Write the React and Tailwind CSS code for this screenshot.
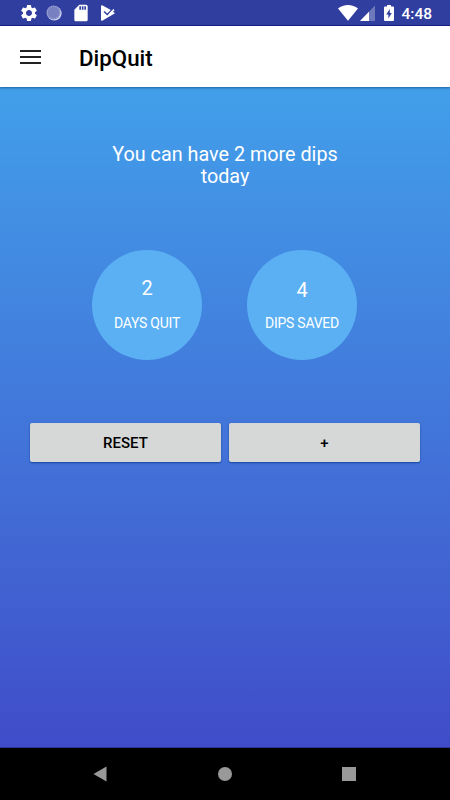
import { MdSettings, MdSdCard } from "react-icons/md";

function StatusBar() {
  return (
    <div className="flex h-[26px] items-center justify-between border-b border-[#151d84] bg-[#303f9f] pl-[18.5px] pr-[18px] text-white">
      <div className="flex items-center pt-px">
        <MdSettings className="h-5 w-5" />
        <svg viewBox="0 0 16 16" className="ml-[7.5px] h-4 w-4">
          <circle cx="8.3" cy="8.3" r="7.3" fill="#d5d9f0" />
          <circle cx="7.5" cy="7.5" r="7" fill="#7781c2" />
          <circle
            cx="7.5"
            cy="7.5"
            r="6.2"
            fill="none"
            stroke="#b3b9df"
            strokeWidth="1"
            strokeDasharray="1 1"
          />
        </svg>
        <MdSdCard className="ml-[9px] h-5 w-5" />
        <svg viewBox="0 0 15 16" className="ml-[9.5px] h-4 w-[15px]">
          <path
            d="M1.2 0.2 L9.8 5 L14 8.2 L1.2 15.8 Q0 16 0 14.8 V1.2 Q0 0 1.2 0.2Z"
            fill="#fff"
          />
          <path
            d="M3 6.4 L6.2 9.6 L11.4 4.4"
            fill="none"
            stroke="#303f9f"
            strokeWidth="1.4"
          />
          <path
            d="M8.4 9.2 L13 4.6"
            fill="none"
            stroke="#fff"
            strokeWidth="1.6"
          />
        </svg>
      </div>
      <div className="flex items-center">
        <svg viewBox="0 0 20 16" className="h-4 w-5">
          <path d="M0 3.6 C5.5 -1.2 14.5 -1.2 20 3.6 L10 15.8Z" fill="#fff" />
        </svg>
        <svg viewBox="0 0 15 16" className="ml-[2px] h-4 w-[15px]">
          <path d="M0 16 L15 0.5 V16Z" fill="#fff" fillOpacity="0.3" />
          <path d="M0 16 L9 6.7 V16Z" fill="#fff" />
        </svg>
        <svg viewBox="0 0 10 16" className="ml-[9px] h-4 w-[10px]">
          <path
            d="M3 0 H7 V1.6 H9 Q10 1.6 10 2.6 V15 Q10 16 9 16 H1 Q0 16 0 15 V2.6 Q0 1.6 1 1.6 H3Z"
            fill="#fff"
          />
          <path d="M5.8 4 L2.2 9.4 H4.4 V13.4 L7.8 7.9 H5.8Z" fill="#303f9f" />
        </svg>
        <span className="ml-[7.5px] pt-[4px] text-[15.5px] font-medium leading-none">
          4:48
        </span>
      </div>
    </div>
  );
}

function AppBar() {
  return (
    <header className="z-10 flex h-[61px] items-center bg-white pl-5 shadow-[0_1px_2px_rgba(0,60,110,0.6)]">
      <button className="flex w-[21px] flex-col gap-1" aria-label="Menu">
        <span className="h-[2px] w-full bg-[#222]" />
        <span className="h-[2px] w-full bg-[#222]" />
        <span className="h-[2px] w-full bg-[#222]" />
      </button>
      <h1 className="ml-[38px] pt-[3px] text-[22.3px] font-medium leading-none text-black">
        DipQuit
      </h1>
    </header>
  );
}

function Stat({ value, label, className }) {
  return (
    <div
      className={`flex h-[110px] w-[110px] flex-col items-center rounded-full bg-[#5bb0f3] text-white ${className}`}
    >
      <span className="text-xl leading-6">{value}</span>
      <span className="mt-auto mb-[27px] text-sm leading-5 tracking-[-0.25px]">
        {label}
      </span>
    </div>
  );
}

function ActionButton({ children }) {
  return (
    <button className="h-[39px] flex-1 rounded-[2px] bg-[#d6d8d7] pt-[2px] text-[15px] font-medium text-black shadow-[0_1px_2px_rgba(0,50,130,0.7)]">
      {children}
    </button>
  );
}

function NavBar() {
  return (
    <nav className="flex h-[52px] items-center justify-between bg-black pl-[93px] pr-[94px]">
      <svg viewBox="0 0 14 16" className="h-4 w-[14px]">
        <path d="M0.5 8 L13.5 0.5 V15.5Z" fill="#999" />
      </svg>
      <span className="h-[14px] w-[14px] rounded-full bg-[#999]" />
      <span className="h-[14px] w-[14px] bg-[#999]" />
    </nav>
  );
}

export default function App() {
  return (
    <div className="flex h-[800px] w-[450px] flex-col overflow-hidden bg-black font-[Roboto,sans-serif]">
      <StatusBar />
      <AppBar />
      <main className="flex flex-1 flex-col items-center border-b border-[#2c3794] bg-linear-to-b from-[#429fea] to-[#404cc9]">
        <p className="mt-[56px] h-[43px] w-[240px] overflow-hidden pt-[0.6px] text-center text-[19.8px] leading-[22.4px] text-white">
          You can have 2 more dips today
        </p>
        <div className="mt-[64px] flex gap-[45px] pr-px">
          <Stat value="2" label="DAYS QUIT" className="pt-[26px]" />
          <Stat value="4" label="DIPS SAVED" className="pt-[28px]" />
        </div>
        <div className="mt-[63px] flex w-full gap-2 px-[30px]">
          <ActionButton>RESET</ActionButton>
          <ActionButton>+</ActionButton>
        </div>
      </main>
      <NavBar />
    </div>
  );
}
